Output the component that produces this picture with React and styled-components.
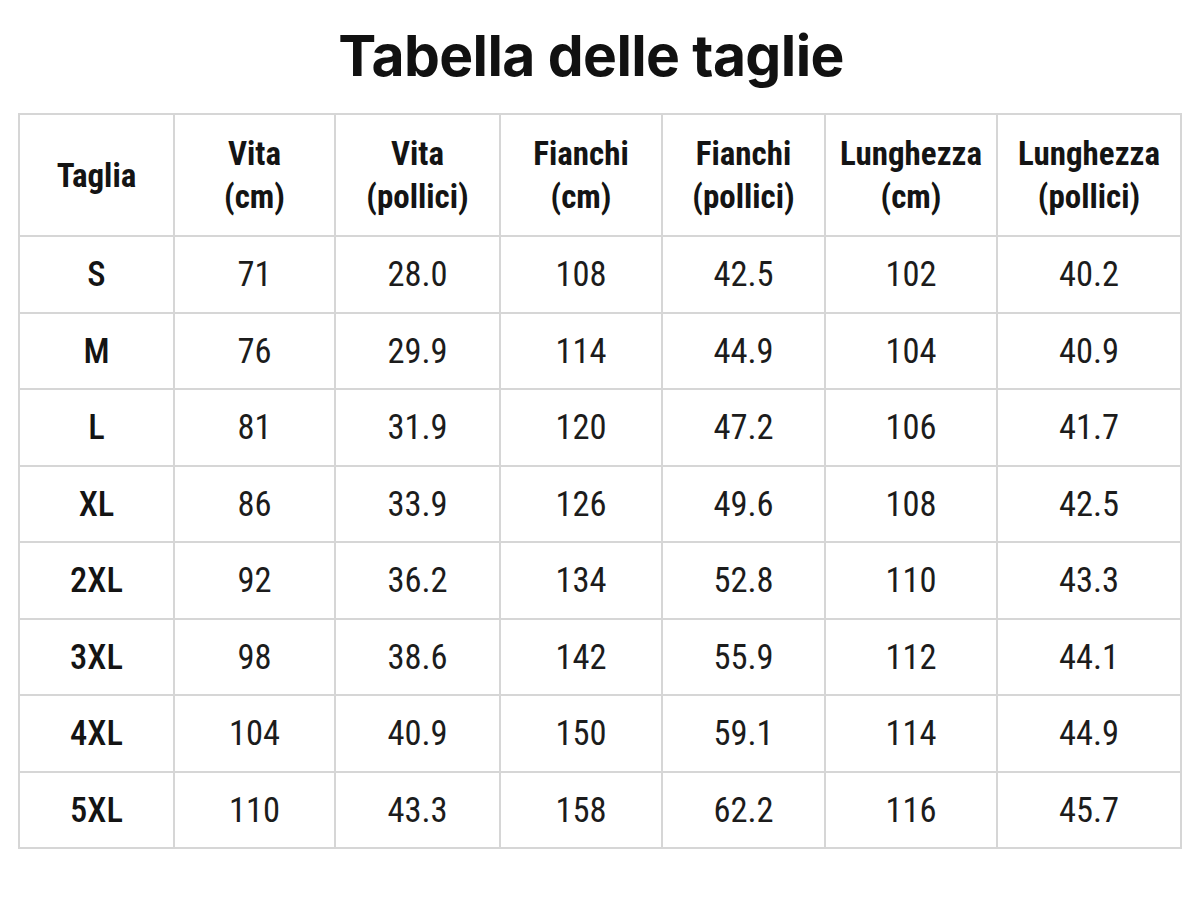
import styled, { createGlobalStyle } from "styled-components";

const GlobalStyle = createGlobalStyle`
  html, body {
    margin: 0;
    padding: 0;
    background: #ffffff;
  }
`;

const Page = styled.div`
  width: 1200px;
  height: 900px;
  box-sizing: border-box;
  padding: 22px 19px 0;
  display: flex;
  flex-direction: column;
  align-items: center;
`;

const Title = styled.h1`
  margin: 0 0 23px;
  font-family: Inter, "Liberation Sans", sans-serif;
  font-weight: 700;
  font-size: 57px;
  line-height: 68px;
  letter-spacing: -0.6px;
  color: #111;
  transform: translateX(-9px);
`;

const Table = styled.table`
  width: 1162px;
  border-collapse: collapse;
  table-layout: fixed;
  font-family: "Roboto Condensed", "DejaVu Sans Condensed", Roboto, sans-serif;
  color: #141414;
`;

const HeadCell = styled.th`
  height: 120px;
  padding: 0;
  border: 2px solid #d6d6d6;
  font-weight: 700;
  font-size: 33px;
  line-height: 43px;
  text-align: center;
  vertical-align: middle;
`;

const Cell = styled.td`
  height: 74.5px;
  padding: 0;
  border: 2px solid #d6d6d6;
  font-size: 34.5px;
  font-weight: ${({ $size }) => ($size ? 500 : 400)};
  color: ${({ $size }) => ($size ? "#141414" : "#1c1c1c")};
  text-align: center;
  vertical-align: middle;
`;

const columns = [
  { w: 155, label: ["Taglia"] },
  { w: 161, label: ["Vita", "(cm)"] },
  { w: 165, label: ["Vita", "(pollici)"] },
  { w: 162, label: ["Fianchi", "(cm)"] },
  { w: 163, label: ["Fianchi", "(pollici)"] },
  { w: 172, label: ["Lunghezza", "(cm)"] },
  { w: 184, label: ["Lunghezza", "(pollici)"] },
];

const rows = [
  ["S", "71", "28.0", "108", "42.5", "102", "40.2"],
  ["M", "76", "29.9", "114", "44.9", "104", "40.9"],
  ["L", "81", "31.9", "120", "47.2", "106", "41.7"],
  ["XL", "86", "33.9", "126", "49.6", "108", "42.5"],
  ["2XL", "92", "36.2", "134", "52.8", "110", "43.3"],
  ["3XL", "98", "38.6", "142", "55.9", "112", "44.1"],
  ["4XL", "104", "40.9", "150", "59.1", "114", "44.9"],
  ["5XL", "110", "43.3", "158", "62.2", "116", "45.7"],
];

export default function App() {
  return (
    <>
      <GlobalStyle />
      <Page>
        <Title>Tabella delle taglie</Title>
        <Table>
          <colgroup>
            {columns.map((c, i) => (
              <col key={i} style={{ width: c.w }} />
            ))}
          </colgroup>
          <thead>
            <tr>
              {columns.map((c, i) => (
                <HeadCell key={i}>
                  {c.label.map((l, j) => (
                    <div key={j}>{l}</div>
                  ))}
                </HeadCell>
              ))}
            </tr>
          </thead>
          <tbody>
            {rows.map((r) => (
              <tr key={r[0]}>
                {r.map((v, i) => (
                  <Cell key={i} $size={i === 0}>
                    {v}
                  </Cell>
                ))}
              </tr>
            ))}
          </tbody>
        </Table>
      </Page>
    </>
  );
}
